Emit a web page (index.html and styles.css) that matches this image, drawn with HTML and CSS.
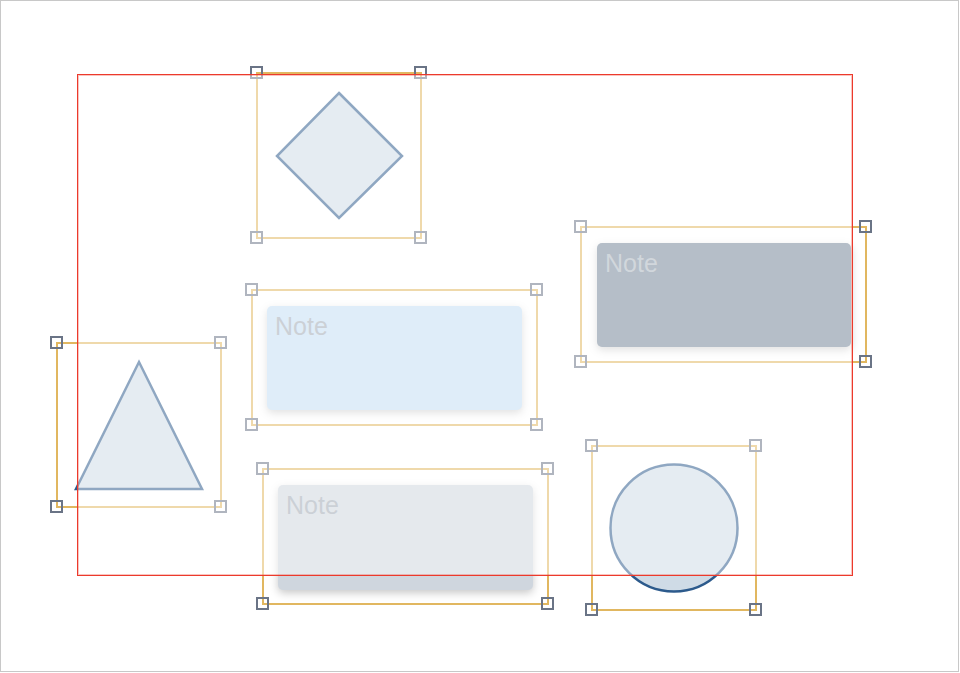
FILE: index.html
```html
<!DOCTYPE html>
<html>
<head>
<meta charset="utf-8">
<link rel="stylesheet" href="styles.css">
</head>
<body>
<div class="stage">
  <div class="node shape n-diamond">
    <svg class="geo" width="164" height="165" viewBox="0 0 164 165"><polygon points="82,20 145,83 82,145 20,83"/></svg>
    <span class="h tl"></span><span class="h tr"></span><span class="h bl"></span><span class="h br"></span>
  </div>
  <div class="node shape n-tri">
    <svg class="geo" width="164" height="164" viewBox="0 0 164 164"><polygon points="82,19 145,146 19,146"/></svg>
    <span class="h tl"></span><span class="h tr"></span><span class="h bl"></span><span class="h br"></span>
  </div>
  <div class="node shape n-circle">
    <svg class="geo" width="164" height="164" viewBox="0 0 164 164"><circle cx="82" cy="82" r="63.5"/></svg>
    <span class="h tl"></span><span class="h tr"></span><span class="h bl"></span><span class="h br"></span>
  </div>
  <div class="node notebox n-note1">
    <div class="note blue">Note</div>
    <span class="h tl"></span><span class="h tr"></span><span class="h bl"></span><span class="h br"></span>
  </div>
  <div class="node notebox n-note2">
    <div class="note slate">Note</div>
    <span class="h tl"></span><span class="h tr"></span><span class="h bl"></span><span class="h br"></span>
  </div>
  <div class="node notebox n-note3">
    <div class="note grey">Note</div>
    <span class="h tl"></span><span class="h tr"></span><span class="h bl"></span><span class="h br"></span>
  </div>
  <div class="viewport"></div>
</div>
</body>
</html>
```
FILE: styles.css
```css
html, body {
  margin: 0;
  padding: 0;
  background: #ffffff;
}
.stage {
  position: relative;
  width: 959px;
  height: 672px;
  box-sizing: border-box;
  border: 1px solid #c8c8c8;
  overflow: hidden;
  font-family: "Liberation Sans", Arial, sans-serif;
}
.node {
  position: absolute;
  box-sizing: border-box;
}
.node::before {
  content: "";
  position: absolute;
  left: -1px;
  top: -1px;
  right: -1px;
  bottom: -1px;
  border: 2px solid #dcaa44;
  opacity: 0.85;
}
.h {
  position: absolute;
  width: 13px;
  height: 13px;
  box-sizing: border-box;
  border: 2px solid #6a7486;
}
.tl { left: -7px; top: -7px; }
.tr { right: -6px; top: -7px; }
.bl { left: -7px; bottom: -6px; }
.br { right: -6px; bottom: -6px; }

.geo {
  position: relative;
  display: block;
}
.geo polygon, .geo circle {
  fill: #cfdbe6;
  stroke: #2c5a8c;
  stroke-width: 2.5;
  stroke-linejoin: miter;
}

.n-diamond { left: 256px; top: 72px; width: 164px; height: 165px; }
.n-tri { left: 56px; top: 342px; width: 164px; height: 164px; }
.n-circle { left: 591px; top: 445px; width: 164px; height: 164px; }

.notebox {
  width: 285px;
  height: 135px;
  padding: 16px 15px;
}
.n-note1 { left: 251px; top: 289px; }
.n-note2 { left: 580px; top: 226px; padding-left: 16px; }
.n-note3 { left: 262px; top: 468px; }

.note {
  position: relative;
  width: 255px;
  height: 104px;
  box-sizing: border-box;
  padding: 6px 8px;
  border-radius: 5px;
  font-size: 25px;
  color: #9ea7b1;
  box-shadow: 0 3px 9px rgba(0, 0, 0, 0.22);
}
.n-note2 .note { width: 254px; }
.n-note3 .note { height: 105px; }
.note.blue { background: #c3ddf3; }
.note.slate { background: #738497; color: #a9b3bd; }
.note.grey { background: #cfd6de; }

.viewport {
  position: absolute;
  left: 76px;
  top: 73px;
  width: 776px;
  height: 502px;
  box-sizing: border-box;
  border: 1px solid #ec3a2c;
  box-shadow: inset 0 0 0 1px rgba(236, 58, 44, 0.3);
  background: rgba(255, 255, 255, 0.47);
}
```
